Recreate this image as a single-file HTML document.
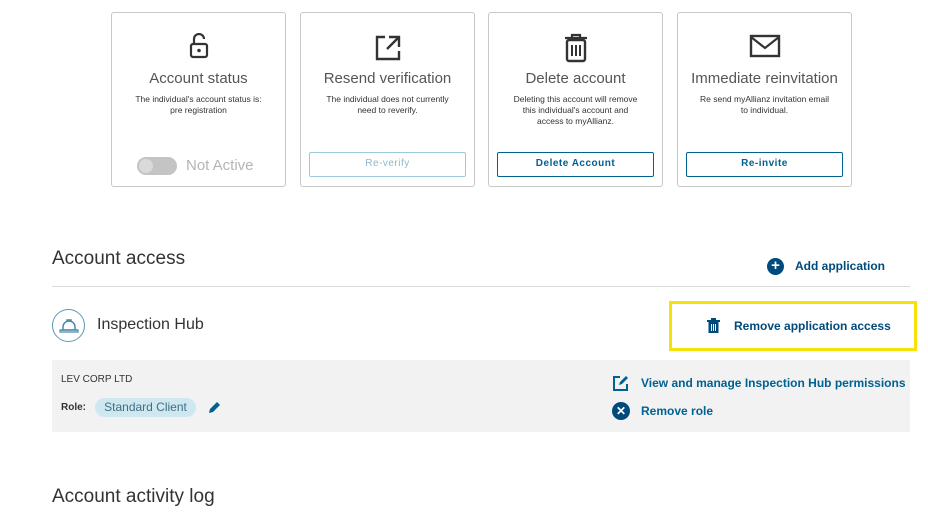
<!DOCTYPE html>
<html><head><style>
*{box-sizing:border-box;margin:0;padding:0}
body{width:928px;height:516px;background:#fff;font-family:"Liberation Sans",sans-serif;position:relative;overflow:hidden;color:#414141}
.card{position:absolute;top:12px;width:175px;height:175px;border:1px solid #c8c8c8;border-radius:3px;text-align:center}
.card svg{position:absolute;left:50%;transform:translateX(-50%);top:20px}
.card h3{position:absolute;top:57px;left:0;right:0;font-weight:normal;font-size:15px;color:#555}
.card p{position:absolute;top:81px;left:6px;right:6px;font-size:8.5px;line-height:11px;color:#333}
.btn{position:absolute;left:8px;right:8px;top:139px;height:25px;border:1.5px solid #006192;border-radius:2px;font-size:10px;font-weight:bold;color:#006192;line-height:22px;letter-spacing:.5px}
.abs{position:absolute}
.blue{color:#006192;font-weight:bold}
</style></head><body>

<div class="card" style="left:111px">
<svg width="22" height="26" viewBox="0 0 22 26"><path d="M6 11V6a5 5 0 0 1 10 0" fill="none" stroke="#333" stroke-width="2.2"/><rect x="3" y="11" width="16" height="13" rx="2" fill="none" stroke="#333" stroke-width="2.2"/><circle cx="11" cy="17.5" r="1.8" fill="#333"/></svg>
<h3>Account status</h3>
<p>The individual's account status is:<br>pre registration</p>
<div class="abs" style="left:25px;top:144px;width:40px;height:18px;border-radius:9px;background:#c4c4c4"></div>
<div class="abs" style="left:27px;top:146px;width:14px;height:14px;border-radius:7px;background:#dadada"></div>
<div class="abs" style="left:74px;top:144px;font-size:15px;color:#b5b5b5">Not Active</div>
</div>

<div class="card" style="left:300px">
<svg width="30" height="30" viewBox="0 0 30 30"><path d="M12 4H4v22h22v-8M16 4h10v10M26 4L14 16" fill="none" stroke="#333" stroke-width="2.4"/></svg>
<h3>Resend verification</h3>
<p>The individual does not currently<br>need to reverify.</p>
<div class="btn" style="border-color:#9cc9db;color:#8fb8cc;font-weight:normal">Re-verify</div>
</div>

<div class="card" style="left:488px">
<svg width="26" height="30" viewBox="0 0 26 30"><path d="M2 5h22M9 5V2h8v3" fill="none" stroke="#333" stroke-width="2.2"/><rect x="4" y="7" width="18" height="21" rx="2" fill="none" stroke="#333" stroke-width="2.4"/><path d="M9 12v11M13 12v11M17 12v11" stroke="#333" stroke-width="2"/></svg>
<h3>Delete account</h3>
<p>Deleting this account will remove<br>this individual's account and<br>access to myAllianz.</p>
<div class="btn">Delete Account</div>
</div>

<div class="card" style="left:677px">
<svg width="32" height="26" viewBox="0 0 32 26"><rect x="2" y="3" width="28" height="20" fill="none" stroke="#333" stroke-width="2.4"/><path d="M2 4l14 11 14-11" fill="none" stroke="#333" stroke-width="2.2"/></svg>
<h3>Immediate reinvitation</h3>
<p>Re send myAllianz invitation email<br>to individual.</p>
<div class="btn">Re-invite</div>
</div>

<div class="abs" style="left:52px;top:248px;font-size:19px;color:#333">Account access</div>
<div class="abs" style="left:767px;top:258px;width:17px;height:17px;border-radius:50%;background:#004a7c;color:#fff;font-size:15px;line-height:16px;text-align:center;font-weight:bold">+</div>
<div class="abs blue" style="left:795px;top:259px;font-size:12px;color:#004a7c">Add application</div>
<div class="abs" style="left:52px;top:286px;width:858px;height:1px;background:#d9d9d9"></div>

<div class="abs" style="left:52px;top:309px;width:33px;height:33px;border-radius:50%;border:1.5px solid #5a9bb5"></div>
<svg class="abs" style="left:59px;top:317px" width="20" height="16" viewBox="0 0 20 16"><path d="M2 13h16M4 13V10a6 6 0 0 1 12 0v3M8 5V3h4v2" fill="none" stroke="#4a8aa8" stroke-width="1.5"/><path d="M1 13h18v2H1z" fill="none" stroke="#4a8aa8" stroke-width="1.2"/></svg>
<div class="abs" style="left:97px;top:316px;font-size:16px;color:#333">Inspection Hub</div>

<div class="abs" style="left:669px;top:301px;width:248px;height:50px;border:3px solid #f4e20a"></div>
<svg class="abs" style="left:707px;top:318px" width="13" height="15" viewBox="0 0 13 15"><path d="M0 2h13v2H0zM4 0h5v2H4z" fill="#004a7c"/><path d="M1.5 4h10v11h-10z" fill="#004a7c"/><path d="M4.5 6v7M6.5 6v7M8.5 6v7" stroke="#fff" stroke-width="1"/></svg>
<div class="abs blue" style="left:734px;top:319px;font-size:12px;color:#004a7c">Remove application access</div>

<div class="abs" style="left:52px;top:360px;width:858px;height:72px;background:#f2f2f2"></div>
<div class="abs" style="left:61px;top:374px;font-size:10px;color:#333">LEV CORP LTD</div>
<div class="abs" style="left:61px;top:402px;font-size:10px;color:#333;font-weight:bold">Role:</div>
<div class="abs" style="left:95px;top:398px;width:101px;height:19px;border-radius:10px;background:#cfe7ee;font-size:12px;line-height:19px;text-align:center;color:#3d6f84">Standard Client</div>
<svg class="abs" style="left:207px;top:400px" width="15" height="15" viewBox="0 0 15 15"><path d="M2 13l1-4 7-7 3 3-7 7z" fill="#006192"/></svg>

<svg class="abs" style="left:612px;top:375px" width="17" height="16" viewBox="0 0 17 16"><path d="M8 2H2v13h13V9" fill="none" stroke="#006192" stroke-width="2"/><path d="M7 10l1-3 6-6 2 2-6 6z" fill="#006192"/></svg>
<div class="abs blue" style="left:641px;top:376px;font-size:12px">View and manage Inspection Hub permissions</div>
<div class="abs" style="left:612px;top:402px;width:18px;height:18px;border-radius:50%;background:#004a7c;color:#fff;font-size:12px;line-height:18px;text-align:center;font-weight:bold">✕</div>
<div class="abs blue" style="left:641px;top:404px;font-size:12px">Remove role</div>

<div class="abs" style="left:52px;top:486px;font-size:19px;color:#333">Account activity log</div>
</body></html>
